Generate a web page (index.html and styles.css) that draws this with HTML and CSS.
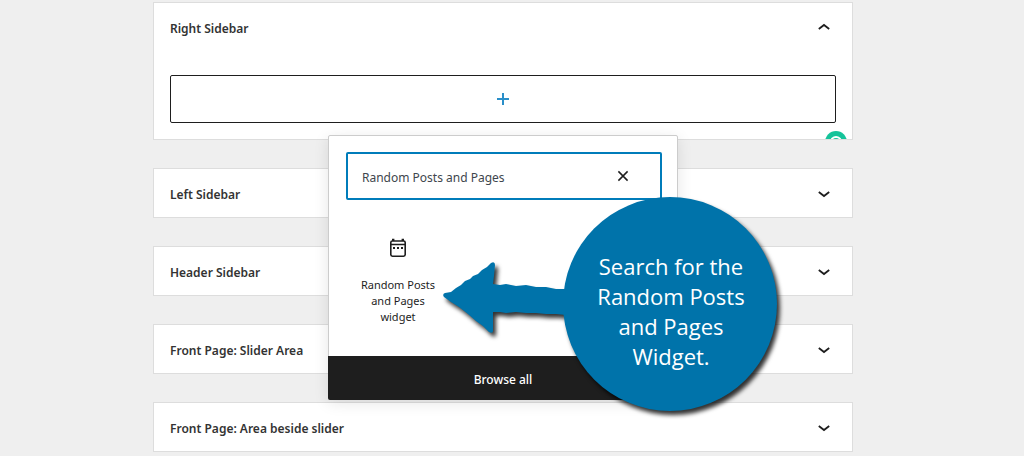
FILE: index.html
```html
<!DOCTYPE html>
<html lang="en">
<head>
  <meta charset="UTF-8" />
  <meta name="viewport" content="width=device-width, initial-scale=1.0"/>
  <title>Widgets</title>
  <link rel="stylesheet" href="styles.css">
</head>
<body>
  <main class="widget-areas">

    <!-- Open area -->
    <section class="area">
      <h2 class="area-title">
        <button class="area-toggle" type="button" aria-expanded="true">
          Right Sidebar
          <svg class="icon chevron" viewBox="0 0 24 24"><path d="M6.8 13L12 9l5.2 4"/></svg>
        </button>
      </h2>
      <div class="area-body">
        <button class="appender" type="button" aria-label="Add block">
          <svg class="icon" viewBox="0 0 24 24"><path d="M18 11H13V6h-2v5H6v2h5v5h2v-5h5z"/></svg>
        </button>
      </div>
      <svg class="checker" viewBox="0 0 22 8">
        <circle cx="11" cy="11" r="11" fill="#15c39a"/>
        <circle cx="11" cy="11" r="5" fill="none" stroke="#fff" stroke-width="2"/>
      </svg>
    </section>

    <!-- Closed areas -->
    <section class="area">
      <h2 class="area-title">
        <button class="area-toggle" type="button" aria-expanded="false">
          Left Sidebar
          <svg class="icon chevron" viewBox="0 0 24 24"><path d="M6.8 10L12 14l5.2-4"/></svg>
        </button>
      </h2>
    </section>
    <section class="area">
      <h2 class="area-title">
        <button class="area-toggle" type="button" aria-expanded="false">
          Header Sidebar
          <svg class="icon chevron" viewBox="0 0 24 24"><path d="M6.8 10L12 14l5.2-4"/></svg>
        </button>
      </h2>
    </section>
    <section class="area">
      <h2 class="area-title">
        <button class="area-toggle" type="button" aria-expanded="false">
          Front Page: Slider Area
          <svg class="icon chevron" viewBox="0 0 24 24"><path d="M6.8 10L12 14l5.2-4"/></svg>
        </button>
      </h2>
    </section>
    <section class="area">
      <h2 class="area-title">
        <button class="area-toggle" type="button" aria-expanded="false">
          Front Page: Area beside slider
          <svg class="icon chevron" viewBox="0 0 24 24"><path d="M6.8 10L12 14l5.2-4"/></svg>
        </button>
      </h2>
    </section>

    <!-- Block inserter popover -->
    <div class="inserter">
      <div class="inserter-main">
        <div class="search">
          <input class="search-input" type="text" aria-label="Search for a block" value="Random Posts and Pages">
          <button class="search-clear" type="button" aria-label="Reset search">
            <svg class="icon" viewBox="0 0 24 24"><path d="M7.4 7.4l9.2 9.2M16.6 7.4l-9.2 9.2" stroke="#1e1e1e" stroke-width="1.5"/></svg>
          </button>
        </div>
        <div class="block-list">
          <button class="block-item" type="button">
            <svg class="icon" viewBox="0 0 24 24">
              <rect x="4.8" y="5" width="14.4" height="15.2" rx="1.6" fill="none" stroke="#1e1e1e" stroke-width="1.6"/>
              <path d="M6 2.8h2.4V5H6zM15.6 2.8H18V5h-2.4zM4.8 7.8h14.4v1.4H4.8zM7 11h2v2H7zM11 11h2v2h-2zM15 11h2v2h-2z"/>
            </svg>
            <span class="block-name">Random Posts and Pages widget</span>
          </button>
        </div>
      </div>
      <button class="browse-all" type="button">Browse all</button>
    </div>

    <!-- Callout -->
    <div class="callout">
      <svg class="callout-shape" viewBox="0 0 344 228">
        <circle cx="230" cy="112" r="107"/>
        <path d="M4 105 Q2 102 5 101 L11 100 L16 96 L21 93 L25 89 L30 87 L33 84 L38 82 L42 78 L47 75 L51 71 Q55 69 55 73 L54 84 L53 92 L60 93 L66 92 L76 94 L86 93 L96 95 L106 95 L116 97 L126 97 L126 123 L116 122 L106 122 L96 121 L86 121 L76 120 L66 121 L60 120 L53 120 L53 139 Q53 142 49 140 L43 134 L36 129 L28 122 L19 115 L11 110 Z"/>
      </svg>
      <p class="callout-text">Search for the Random Posts and Pages Widget.</p>
    </div>

  </main>
</body>
</html>
```
FILE: styles.css
```css
* {
  box-sizing: border-box;
}

body {
  margin: 0;
  padding: 2px 18px 4px 0;
  background-color: #efefef;
  color: #1e1e1e;
  font-family: 'Noto Sans', sans-serif;
  font-size: 12px;
}

button {
  margin: 0;
  padding: 0;
  border: none;
  background: none;
  color: inherit;
  font: inherit;
  cursor: pointer;
}

.icon {
  display: block;
  flex: none;
  width: 24px;
  height: 24px;
  fill: currentColor;
}

.chevron {
  fill: none;
  stroke: #1e1e1e;
  stroke-width: 1.8;
}

.widget-areas {
  position: relative;
  display: flex;
  flex-direction: column;
  gap: 28px;
  max-width: 700px;
  margin: 0 auto;
}

.area {
  position: relative;
  background-color: #fff;
  border: 1px solid #ddd;
}

.area-title {
  margin: 0;
  font-size: 12px;
  font-weight: 600;
}

.area-toggle {
  display: flex;
  align-items: center;
  justify-content: space-between;
  width: 100%;
  height: 48px;
  padding: 2px 16px 0;
  color: #333;
  text-align: left;
}

.area-body {
  padding: 24px 16px 16px;
}

.appender {
  display: flex;
  align-items: center;
  justify-content: center;
  width: 100%;
  height: 48px;
  border: 1px solid #1e1e1e;
  border-radius: 2px;
  color: #2a8fc9;
}

.checker {
  position: absolute;
  right: 5px;
  bottom: 0;
  width: 22px;
  height: 8px;
}

/* Popover */
.inserter {
  position: absolute;
  top: 133px;
  left: 50%;
  width: 350px;
  transform: translateX(-50%);
  background-color: #fff;
  border: 1px solid #ccc;
  border-radius: 2px;
  box-shadow: 0 3px 15px rgba(0, 0, 0, 0.1);
}

.inserter-main {
  padding: 16px 15px 28px 17px;
}

.search {
  display: flex;
  align-items: center;
  height: 48px;
  padding: 0 25px 0 14px;
  border: 2px solid #007cba;
  border-radius: 2px;
}

.search-input {
  flex: 1;
  min-width: 0;
  padding: 2px 0 0;
  border: none;
  outline: none;
  background: none;
  color: #40464d;
  font: inherit;
}

.block-list {
  display: grid;
  grid-template-columns: repeat(3, 1fr);
  column-gap: 2px;
  padding-top: 24px;
}

.block-item {
  display: flex;
  flex-direction: column;
  align-items: center;
  gap: 17px;
  padding: 12px 8px 3px;
}

.block-name {
  max-width: 80px;
  font-size: 11px;
  line-height: 16px;
}

.browse-all {
  display: block;
  width: calc(100% + 2px);
  height: 44px;
  margin: 0 -1px -1px;
  padding-top: 2px;
  background-color: #1e1e1e;
  border-radius: 0 0 2px 2px;
  color: #fff;
  font-weight: 500;
}

/* Callout with arrow */
.callout {
  position: absolute;
  top: 190px;
  left: calc(50% - 63px);
  width: 344px;
  height: 228px;
  pointer-events: none;
}

.callout-shape {
  display: block;
  width: 100%;
  height: 100%;
  fill: #0073aa;
  filter: drop-shadow(3px 4px 2px rgba(0, 0, 0, 0.8));
}

.callout-text {
  position: absolute;
  top: 59px;
  right: 27px;
  width: 172px;
  margin: 0;
  color: #fff;
  font-family: 'Open Sans', sans-serif;
  font-size: 22px;
  font-weight: 500;
  line-height: 30px;
  text-align: center;
}
```
